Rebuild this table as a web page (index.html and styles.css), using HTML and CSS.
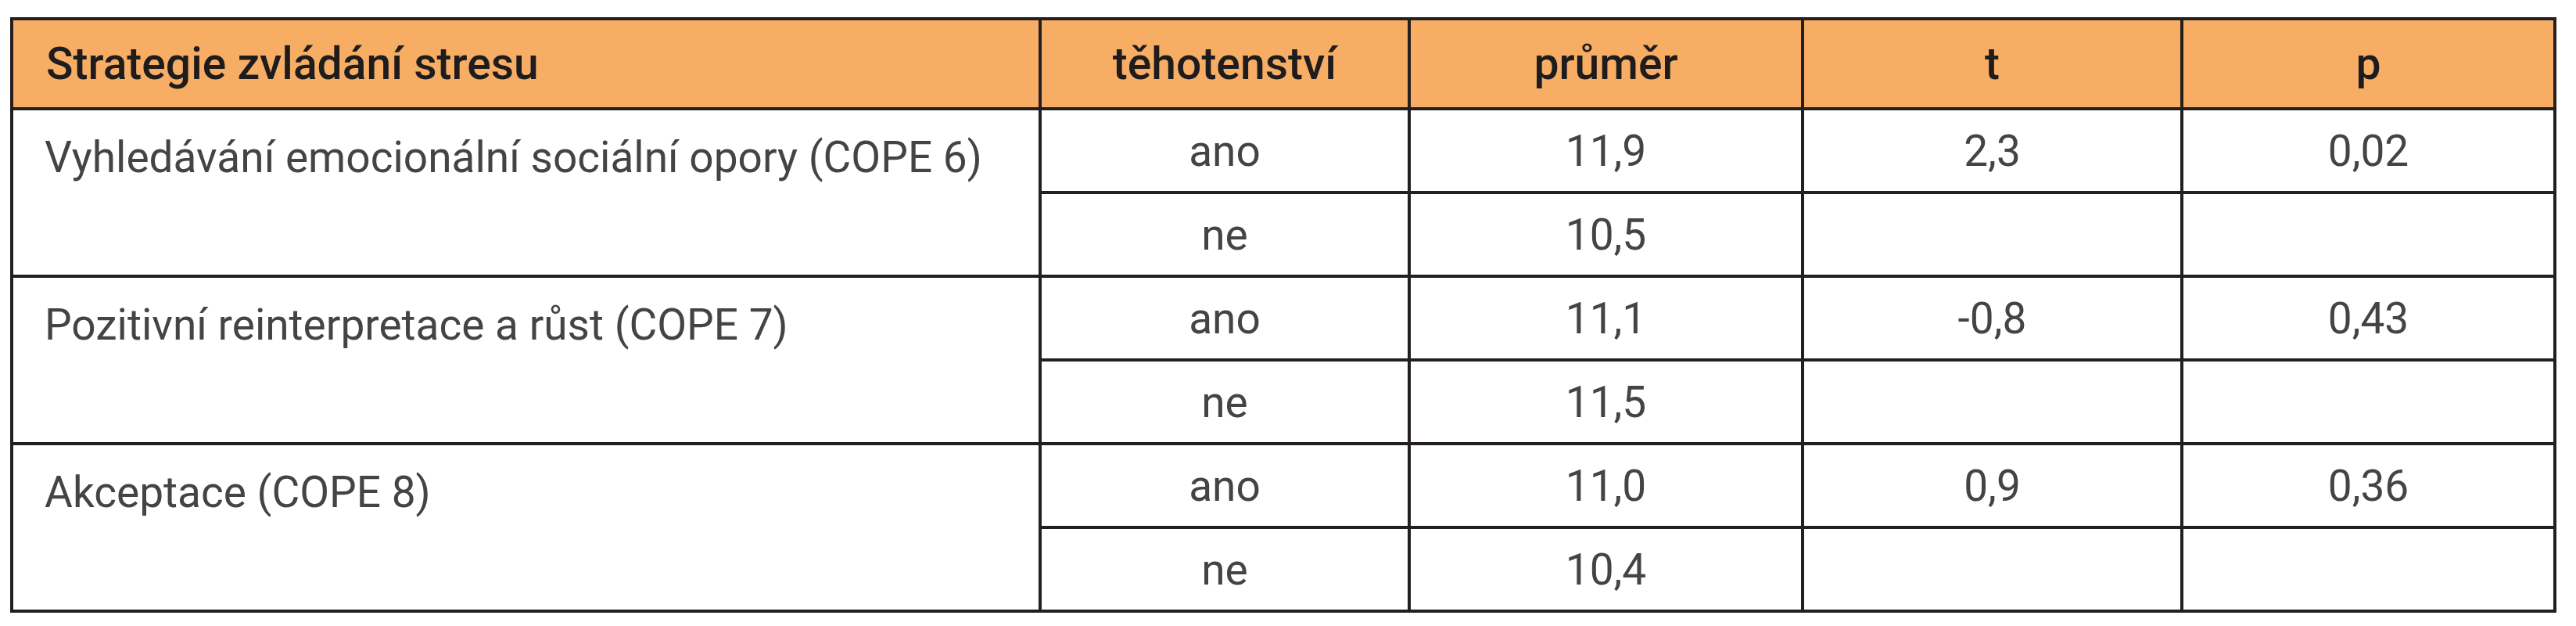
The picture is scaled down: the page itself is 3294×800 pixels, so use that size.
FILE: index.html
```html
<!DOCTYPE html>
<html lang="cs">
<head>
<meta charset="utf-8">
<title>Strategie zvládání stresu</title>
<link rel="stylesheet" href="styles.css">
</head>
<body>
<table class="stats">
  <colgroup>
    <col class="c-strat">
    <col class="c-preg">
    <col class="c-mean">
    <col class="c-t">
    <col class="c-p">
  </colgroup>
  <thead>
    <tr class="head">
      <th class="left">Strategie zvládání stresu</th>
      <th>těhotenství</th>
      <th>průměr</th>
      <th>t</th>
      <th>p</th>
    </tr>
  </thead>
  <tbody>
    <tr class="sub">
      <td class="name" rowspan="2">Vyhledávání emocionální sociální opory (COPE 6)</td>
      <td>ano</td><td>11,9</td><td>2,3</td><td>0,02</td>
    </tr>
    <tr class="sub">
      <td>ne</td><td>10,5</td><td></td><td></td>
    </tr>
    <tr class="sub">
      <td class="name" rowspan="2">Pozitivní reinterpretace a růst (COPE 7)</td>
      <td>ano</td><td>11,1</td><td>-0,8</td><td>0,43</td>
    </tr>
    <tr class="sub">
      <td>ne</td><td>11,5</td><td></td><td></td>
    </tr>
    <tr class="sub">
      <td class="name" rowspan="2">Akceptace (COPE 8)</td>
      <td>ano</td><td>11,0</td><td>0,9</td><td>0,36</td>
    </tr>
    <tr class="sub">
      <td>ne</td><td>10,4</td><td></td><td></td>
    </tr>
  </tbody>
</table>
</body>
</html>
```
FILE: styles.css
```css
html, body {
  margin: 0;
  padding: 0;
  background: #ffffff;
}

body {
  padding: 22px 0 0 13px;
  font-family: Roboto, "Liberation Sans", sans-serif;
}

.stats {
  border-collapse: collapse;
  table-layout: fixed;
  width: 3252px;
  border: 4px solid #231f20;
}

.c-strat { width: 1315px; }
.c-preg { width: 472px; }
.c-mean { width: 503px; }
.c-t { width: 485px; }
.c-p { width: 477px; }

.stats th,
.stats td {
  border: 4px solid #231f20;
  padding: 0;
  text-align: center;
  vertical-align: middle;
}

.head th {
  background: #f7ae64;
  color: #1f1c1d;
  font-weight: 500;
  font-size: 57px;
  height: 111px;
}

.head th.left {
  text-align: left;
  padding-left: 42px;
}

.sub td {
  height: 103px;
  font-size: 55px;
  color: #454344;
  font-weight: 400;
}

.sub td.name {
  text-align: left;
  vertical-align: top;
  padding: 28px 0 0 40px;
}
```
